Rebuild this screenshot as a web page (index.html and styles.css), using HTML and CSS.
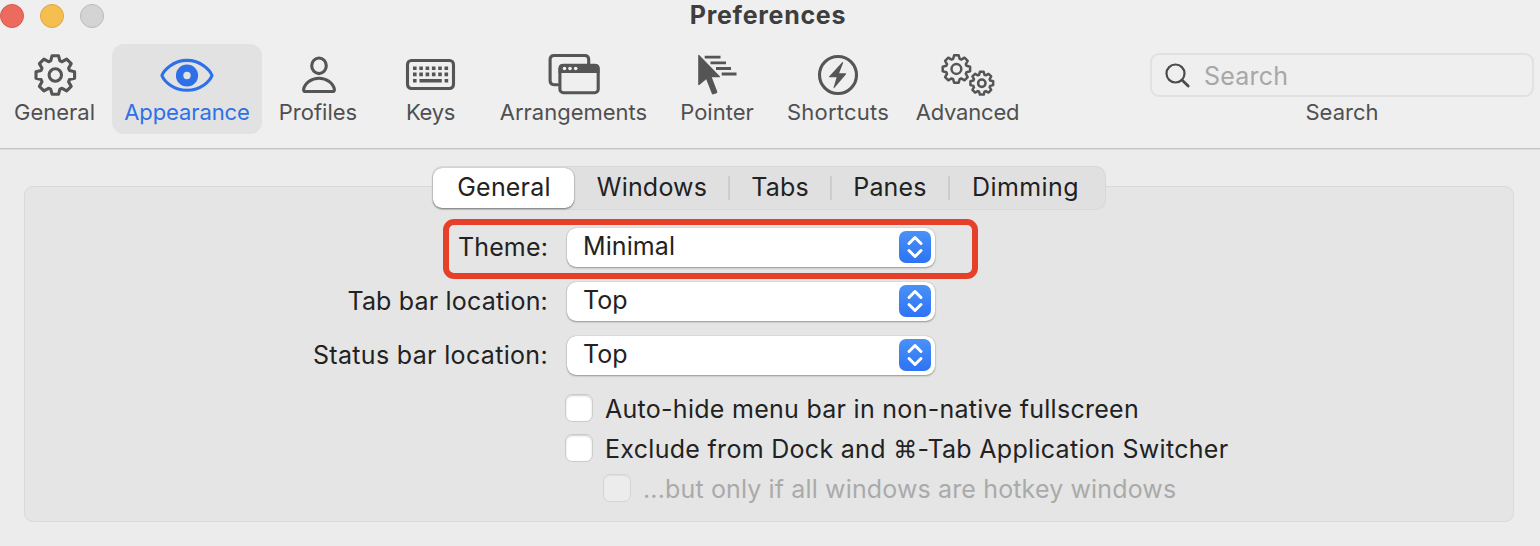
FILE: index.html
```html
<!DOCTYPE html>
<html lang="en">
<head>
<meta charset="utf-8">
<title>Preferences</title>
<link rel="stylesheet" href="styles.css">
</head>
<body>
<svg class="defs" width="0" height="0">
  <defs>
    <path id="gear" vector-effect="non-scaling-stroke" d="M-4.6-14.2L-3.2-19.3 3.2-19.3 4.6-14.2 6.79-13.29 11.38-15.91 15.91-11.38 13.29-6.79 14.2-4.6 19.3-3.2 19.3 3.2 14.2 4.6 13.29 6.79 15.91 11.38 11.38 15.91 6.79 13.29 4.6 14.2 3.2 19.3-3.2 19.3-4.6 14.2-6.79 13.29-11.38 15.91-15.91 11.38-13.29 6.79-14.2 4.6-19.3 3.2-19.3-3.2-14.2-4.6-13.29-6.79-15.91-11.38-11.38-15.91-6.79-13.29Z"/>
    <g id="chevrons"><path d="M10 12.5L16 6.5L22 12.5M10 19.5L16 25.5L22 19.5"/></g>
  </defs>
</svg>
<header class="toolbar">
  <div class="titlebar">
    <div class="lights"><i class="light red"></i><i class="light yellow"></i><i class="light gray"></i></div>
    <h1 class="title">Preferences</h1>
  </div>
  <nav class="items">
    <div class="item general">
      <svg class="icon" viewBox="0 0 60 50"><g transform="translate(30.3 27)"><use href="#gear"/><circle r="6.2"/></g></svg>
      <span class="label">General</span>
    </div>
    <div class="item appearance">
      <svg class="icon" viewBox="0 0 60 50"><path d="M4.9 27.5C7 22 16 12.4 30 12.4S53 22 55 27.5C53 33 44 42.2 30 42.2S7 33 4.9 27.5Z"/><circle cx="30" cy="27.5" r="7.4" stroke-width="7.4"/></svg>
      <span class="label">Appearance</span>
    </div>
    <div class="item profiles">
      <svg class="icon" viewBox="0 0 60 50"><ellipse cx="31" cy="17.8" rx="7.3" ry="7.8"/><path d="M17.5 43.5H44.5C45.8 43.5 46.6 42.9 46.4 41.5C45.3 35.3 38.8 30.3 31 30.3S16.7 35.3 15.6 41.5C15.4 42.9 16.2 43.5 17.5 43.5Z"/></svg>
      <span class="label">Profiles</span>
    </div>
    <div class="item keys">
      <svg class="icon" viewBox="0 0 60 50"><rect x="7.5" y="12.5" width="46" height="28" rx="4"/><path stroke-width="3.6" stroke-linecap="butt" stroke-dasharray="3.6 2.7" d="M13 20.2H49M13 26.4H49"/><path stroke-width="3.6" stroke-linecap="butt" d="M13 32.7h3.6M19.5 32.7h22.3M44.6 32.7h3.6"/></svg>
      <span class="label l-keys">Keys</span>
    </div>
    <div class="item arrangements">
      <svg class="icon" viewBox="0 0 60 50"><path d="M13.6 36.7H10.2C7.6 36.7 6.1 35.2 6.1 32.6V11.6C6.1 9 7.6 7.5 10.2 7.5H40.6C43.2 7.5 44.7 9 44.7 11.6V16"/><rect x="15.9" y="17.3" width="38.3" height="27.5" rx="3.5"/><path class="solid" d="M14.6 25V20Q14.6 16 18.6 16H51.5Q55.5 16 55.5 20V25Z"/><g class="hole"><circle cx="20.5" cy="20.5" r="1.8"/><circle cx="26" cy="20.5" r="1.8"/><circle cx="31.7" cy="20.5" r="1.8"/></g></svg>
      <span class="label">Arrangements</span>
    </div>
    <div class="item pointer">
      <svg class="icon" viewBox="0 0 60 50"><path class="solid" d="M11.2 7.4Q11.2 6.1 12.2 7L32.8 28.2Q33.8 29.3 32.4 29.3H24.8L30.2 43.6Q30.6 44.8 29.6 45.2L26.4 46.3Q25.2 46.7 24.8 45.6L19.2 31.2L12.6 36.8Q11.2 37.8 11.2 36.2Z"/><path stroke-width="2.8" stroke-linecap="butt" d="M17.7 9.2H33.5M23.5 14.9H39M29 20.5H44M34.7 26H49.5"/></svg>
      <span class="label">Pointer</span>
    </div>
    <div class="item shortcuts">
      <svg class="icon" viewBox="0 0 60 50"><circle cx="30" cy="27" r="18.5"/><path class="solid" d="M34.2 14.2L21.1 28.5Q20.6 29.2 21.5 29.2H28.6L25.6 39.4Q25.4 40.6 26.3 39.9L38 26.3Q38.6 25.3 37.6 25.3H31.1L35.1 14.9Q35.2 13.5 34.2 14.2Z"/></svg>
      <span class="label l-shortcuts">Shortcuts</span>
    </div>
    <div class="item advanced">
      <svg class="icon thin" viewBox="0 0 60 50"><g transform="translate(18.4 21)"><use href="#gear" transform="scale(.71)"/><circle r="4.9"/></g><g transform="translate(43.8 35.2)"><use href="#gear" transform="scale(.59)"/><circle r="3.7"/></g></svg>
      <span class="label l-advanced">Advanced</span>
    </div>
    <div class="search">
      <div class="field">
        <svg class="glass" viewBox="0 0 28 28"><circle cx="11.5" cy="11.5" r="9"/><path d="M18.2 18.2L24.2 24" stroke-width="2.8"/></svg>
        <span class="placeholder">Search</span>
      </div>
      <span class="label">Search</span>
    </div>
  </nav>
</header>
<main class="content">
  <div class="tabs">
    <div class="tab active"><span>General</span></div>
    <div class="tab windows"><span>Windows</span></div>
    <div class="tab tabs-tab"><span>Tabs</span></div>
    <div class="tab panes"><span>Panes</span></div>
    <div class="tab dimming"><span>Dimming</span></div>
  </div>
  <section class="panel">
    <div class="row">
      <span class="name n-theme">Theme:</span>
      <div class="select"><span>Minimal</span><svg class="stepper" viewBox="0 0 32 32"><use href="#chevrons"/></svg></div>
      <div class="highlight"></div>
    </div>
    <div class="row">
      <span class="name n-tab">Tab bar location:</span>
      <div class="select"><span>Top</span><svg class="stepper" viewBox="0 0 32 32"><use href="#chevrons"/></svg></div>
    </div>
    <div class="row">
      <span class="name n-status">Status bar location:</span>
      <div class="select"><span>Top</span><svg class="stepper" viewBox="0 0 32 32"><use href="#chevrons"/></svg></div>
    </div>
    <div class="checks">
      <div class="check"><i class="box"></i><span class="c-auto">Auto-hide menu bar in non-native fullscreen</span></div>
      <div class="check"><i class="box"></i><span class="c-exclude">Exclude from Dock and <span class="cmd">⌘</span>-Tab Application Switcher</span></div>
      <div class="check disabled"><i class="box"></i><span class="c-only">...but only if all windows are hotkey windows</span></div>
    </div>
  </section>
</main>
</body>
</html>
```
FILE: styles.css
```css
* { box-sizing: border-box; }
body {
  margin: 0;
  width: 1540px;
  height: 546px;
  overflow: hidden;
  background: #ececec;
  color: #222;
  font-family: Inter, "Liberation Sans", sans-serif;
  font-size: 25px;
  white-space: nowrap;
}
.defs { display: block; }
svg { fill: none; stroke: currentColor; stroke-linecap: round; stroke-linejoin: round; flex: none; }

.toolbar { height: 149px; background: #efefef; border-bottom: 1px solid #c4c4c4; box-shadow: 0 1px 1px #dedede; }
.titlebar { height: 32px; display: grid; grid-template-columns: 1fr auto 1fr; align-items: center; padding-right: 4px; }
.lights { display: flex; gap: 16px; }
.light { width: 24px; height: 24px; border-radius: 50%; border: 1px solid; }
.red { background: #ed6a5f; border-color: #d65a50; }
.yellow { background: #f5bf4f; border-color: #dba840; }
.gray { background: #d4d4d4; border-color: #b9b9b9; }
.title { margin: 0; padding-bottom: 2px; font-size: 25px; line-height: 30px; font-weight: 700; letter-spacing: .7px; color: #3e3e3e; }

.items { display: flex; padding-top: 12px; height: 116px; }
.item { height: 90px; display: flex; flex-direction: column; align-items: center; border-radius: 12px; color: #555; }
.icon { width: 60px; height: 50px; margin-top: 4px; stroke-width: 3.1; }
.thin { stroke-width: 2.5; }
.solid { fill: currentColor; stroke: none; }
.hole { fill: #efefef; stroke: none; }
.label { font-size: 22px; line-height: 28px; color: #505050; }
.general { width: 109px; margin-right: 3px; }
.appearance { width: 150px; background: #e2e2e2; color: #2d70e8; }
.appearance .label { color: #2d70e8; letter-spacing: -.1px; }
.profiles, .keys, .pointer { width: 112px; }
.l-keys { margin-left: 1px; letter-spacing: -.3px; }
.arrangements { width: 175px; }
.shortcuts { width: 130px; }
.l-shortcuts { letter-spacing: .2px; }
.advanced { width: 129px; }
.l-advanced { letter-spacing: -.2px; }
.search { width: 384px; margin: 9px 6px 0 auto; display: flex; flex-direction: column; align-items: center; }
.field { width: 384px; height: 44px; border: 2px solid #e1e1e1; border-radius: 9px; display: flex; align-items: center; padding-left: 12px; color: #4b4b4b; }
.glass { width: 28px; height: 28px; margin-top: 2px; stroke-width: 2.2; }
.placeholder { margin: 2px 0 0 12px; font-size: 25px; letter-spacing: .2px; color: #a7a7a7; }
.search .label { margin-top: 1px; }

.content { padding: 17px 26px 24px 24px; display: flex; flex-direction: column; align-items: center; }
.tabs { width: 674px; height: 44px; z-index: 1; display: flex; align-items: center; padding: 0 1px; border-radius: 10px; background: #e0e0e0; border: 1px solid #d8d8d8; border-left: 0; line-height: 36px; letter-spacing: .2px; }
.tab { display: flex; justify-content: center; align-items: center; height: 24px; border-right: 2px solid #cdcdcd; }
.tab span { padding-bottom: 2px; }
.active { width: 141px; height: 40px; padding-left: 1px; border: 0; border-radius: 9px; background: #fff; box-shadow: 0 1px 2px #0007, 0 0 1px #0005; }
.windows { width: 156px; padding-left: 2px; }
.tabs-tab { width: 102px; }
.panes { width: 118px; }
.dimming { flex: 1; border: 0; padding-right: 3px; letter-spacing: .4px; }

.panel { width: 1490px; height: 336px; margin-top: -24px; padding-top: 41px; background: #e5e5e5; border: 1px solid #d9d9d9; border-radius: 9px; }
.row { position: relative; height: 39px; margin-bottom: 15px; display: grid; grid-template-columns: 523px 368px; column-gap: 19px; align-items: center; }
.name { justify-self: end; line-height: 36px; padding-bottom: 2px; }
.n-theme { letter-spacing: .15px; }
.n-tab { letter-spacing: .18px; }
.n-status { letter-spacing: .33px; }
.select { height: 39px; padding: 0 4px 0 16px; display: flex; align-items: center; justify-content: space-between; border-radius: 9px; background: #fff; box-shadow: 0 1px 2px #0005, 0 0 1px #0005; }
.select span { padding-bottom: 3px; letter-spacing: .1px; }
.stepper { width: 32px; height: 32px; margin-bottom: 1px; border-radius: 7px; background: linear-gradient(#4a91f7, #2d73f5); color: #fff; stroke-width: 3; }
.highlight { position: absolute; left: 418px; top: -9px; width: 535px; height: 60px; border: 6px solid #e6402a; border-radius: 11px; }

.checks { padding: 4px 0 0 540px; }
.check { height: 28px; margin-bottom: 12px; display: flex; align-items: center; gap: 12px; line-height: 28px; }
.check > span { padding-top: 2px; }
.box { width: 28px; height: 28px; border-radius: 7px; background: #fff; border: 1px solid #cbcbcb; box-shadow: inset 0 1px 2px #0003; }
.c-auto { letter-spacing: .28px; }
.c-exclude { letter-spacing: .3px; }
.c-only { letter-spacing: .14px; }
.disabled { padding-left: 38px; color: #aaa; }
.disabled .box { background: #ececec; border-color: #d5d5d5; box-shadow: inset 0 1px 1px #0001; }
.cmd { font-family: "DejaVu Sans", sans-serif; font-size: 24px; line-height: 1; }
```
